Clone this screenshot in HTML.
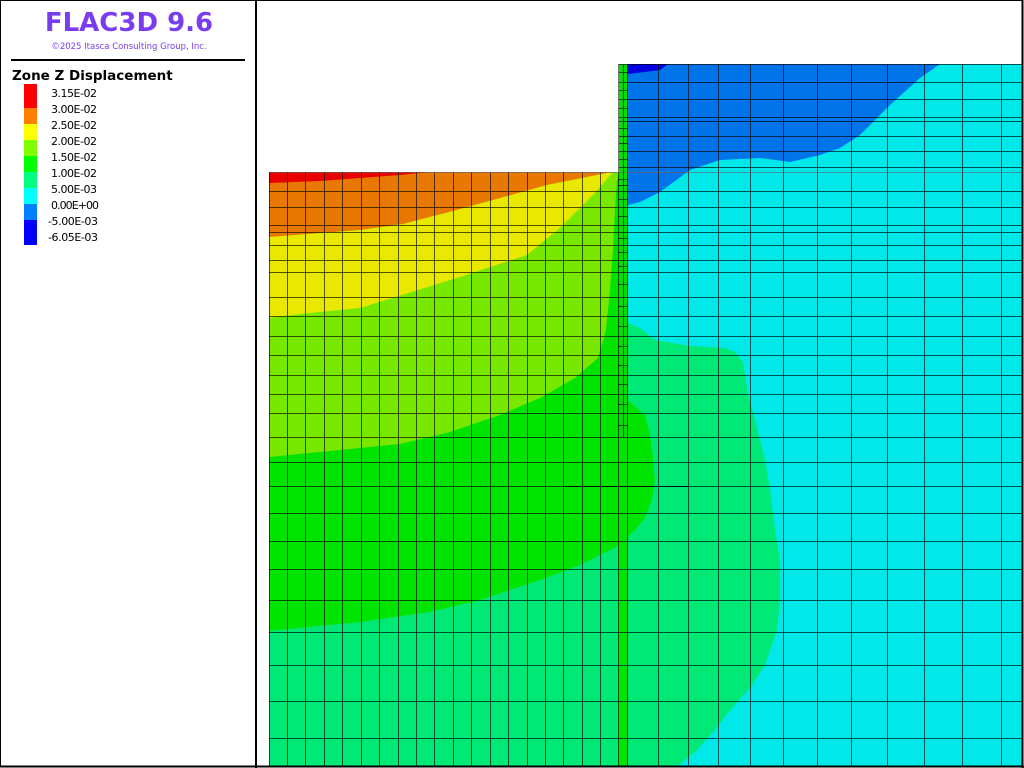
<!DOCTYPE html>
<html><head><meta charset="utf-8"><style>
html,body{margin:0;padding:0;background:#fff;width:1024px;height:768px;overflow:hidden}
</style></head><body>
<svg width="1024" height="768" viewBox="0 0 1024 768" xmlns="http://www.w3.org/2000/svg" style="display:block">
<rect width="1024" height="768" fill="#fff"/>
<rect x="269" y="172" width="349" height="594" fill="#78e800"/>
<rect x="618" y="64" width="404" height="702" fill="#00e8e8"/>
<polygon fill="#e87800" points="269,172 612,172 597,175 547,185 493,200 453,211 403,224 360,230 269,237"/>
<polygon fill="#e80000" points="269,172 430,172 400,175 360,178 320,181 269,183"/>
<polygon fill="#e8e800" points="612,172 613,172 593,195 560,228 527,255 460,277 360,308 300,314 269,318 269,237 360,230 403,224 453,211 493,200 547,185 597,175"/>
<polygon fill="#00e400" points="617,180 618,180 628,180 628,400 645,415 650,435 653,455 655,480 652,500 645,518 635,530 620,545 610,550 580,565 540,580 480,600 430,612 360,622 269,631 269,457 330,451 400,444 450,432 500,415 540,398 575,378 598,358 606,330 610,290 613,250 615,210"/>
<polygon fill="#00e876" points="269,631 360,622 430,612 480,600 540,580 580,565 610,550 620,545 635,530 645,518 652,500 655,480 653,455 650,435 645,415 628,400 628,323 640,328 655,340 690,346 725,348 735,352 743,362 748,395 755,420 765,460 770,490 775,530 780,560 780,600 777,630 765,665 750,688 730,710 715,730 695,752 678,766 269,766"/>
<polygon fill="#0074e8" points="628,64 940,64 920,78 890,105 860,135 840,148 820,155 790,162 760,158 720,160 690,170 660,192 640,202 628,205"/>
<polygon fill="#0000e0" points="628,64 668,64 660,70 645,72 628,74"/>
<rect x="618" y="64" width="10" height="373" fill="#00e000"/>
<rect x="618" y="437" width="10" height="329" fill="#00e400"/>
<g stroke="#000" stroke-opacity="0.65" stroke-width="1" shape-rendering="crispEdges">
<path d="M269.5 172V766M287.5 172V766M305.5 172V766M324.5 172V766M342.5 172V766M361.5 172V766M379.5 172V766M398.5 172V766M416.5 172V766M434.5 172V766M453.5 172V766M471.5 172V766M490.5 172V766M508.5 172V766M527.5 172V766M545.5 172V766M563.5 172V766M582.5 172V766M600.5 172V766"/>
<path d="M618.5 64V766M627.5 64V766M658.5 64V766M688.5 64V766M718.5 64V766M750.5 64V766M783.5 64V766M817.5 64V766M851.5 64V766M887.5 64V766M924.5 64V766M962.5 64V766M1001.5 64V766"/>
<path d="M623.5 64V437"/>
<path d="M618 64.5H1022M618 82.5H1022M618 99.5H1022M618 117.5H1022M618 121.5H1022M618 136.5H1022M618 151.5H1022M618 167.5H1022"/>
<path d="M269 191.5H1022M269 207.5H1022M269 225.5H1022M269 232.5H1022M269 245.5H1022M269 260.5H1022M269 272.5H1022M269 297.5H1022M269 316.5H1022M269 336.5H1022M269 355.5H1022M269 375.5H1022M269 394.5H1022M269 413.5H1022M269 437.5H1022M269 462.5H1022M269 486.5H1022M269 513.5H1022M269 541.5H1022M269 569.5H1022M269 600.5H1022M269 632.5H1022M269 665.5H1022M269 701.5H1022M269 738.5H1022"/>
<path d="M269 172.5H1022" stroke="#666"/>
<path d="M618 72.5H628M618 90.5H628M618 108.5H628M618 128.5H628M618 143.5H628M618 159.5H628M618 179.5H628M618 185.5H628M618 199.5H628M618 216.5H628M618 238.5H628M618 252.5H628M618 266.5H628M618 284.5H628M618 306.5H628M618 326.5H628M618 346.5H628M618 365.5H628M618 384.5H628M618 404.5H628M618 425.5H628"/>
</g>
<path d="M565 486.5H688" stroke="#000" stroke-opacity="0.8" stroke-width="1"/>
<path d="M618.5 64V172" stroke="#777" stroke-width="1"/>
<rect x="0.5" y="0.5" width="1022" height="766" fill="none" stroke="#000" stroke-width="1"/>
<path d="M256 0V768" stroke="#000" stroke-width="2"/>
<path d="M1022.5 0V768" stroke="#000" stroke-width="2"/>
<path d="M0 766.5H1024" stroke="#000" stroke-width="2"/>
<text x="129" y="31" text-anchor="middle" font-family="DejaVu Sans, sans-serif" font-weight="bold" font-size="26" fill="#7a3cf0">FLAC3D 9.6</text>
<text x="129" y="49" text-anchor="middle" font-family="DejaVu Sans, sans-serif" font-size="8.5" fill="#7a3cf0">©2025 Itasca Consulting Group, Inc.</text>
<rect x="11" y="59" width="234" height="2" fill="#000"/>
<text x="12" y="80" font-family="DejaVu Sans, sans-serif" font-weight="bold" font-size="13.5" fill="#000">Zone Z Displacement</text>
<rect x="24" y="84" width="13" height="24" fill="#ff0000"/>
<rect x="24" y="108" width="13" height="16" fill="#ff8000"/>
<rect x="24" y="124" width="13" height="16" fill="#ffff00"/>
<rect x="24" y="140" width="13" height="16" fill="#80ff00"/>
<rect x="24" y="156" width="13" height="16" fill="#00ff00"/>
<rect x="24" y="172" width="13" height="16" fill="#00ff80"/>
<rect x="24" y="188" width="13" height="16" fill="#00ffff"/>
<rect x="24" y="204" width="13" height="16" fill="#0080ff"/>
<rect x="24" y="220" width="13" height="25" fill="#0000ff"/>
<g font-family="DejaVu Sans, sans-serif" font-size="11" fill="#000">
<text x="51" y="97" textLength="46">3.15E-02</text>
<text x="51" y="113" textLength="46">3.00E-02</text>
<text x="51" y="129" textLength="46">2.50E-02</text>
<text x="51" y="145" textLength="46">2.00E-02</text>
<text x="51" y="161" textLength="46">1.50E-02</text>
<text x="51" y="177" textLength="46">1.00E-02</text>
<text x="51" y="193" textLength="46">5.00E-03</text>
<text x="51" y="209" textLength="48">0.00E+00</text>
<text x="48" y="225" textLength="50">-5.00E-03</text>
<text x="48" y="241" textLength="50">-6.05E-03</text>
</g>
</svg>
</body></html>
